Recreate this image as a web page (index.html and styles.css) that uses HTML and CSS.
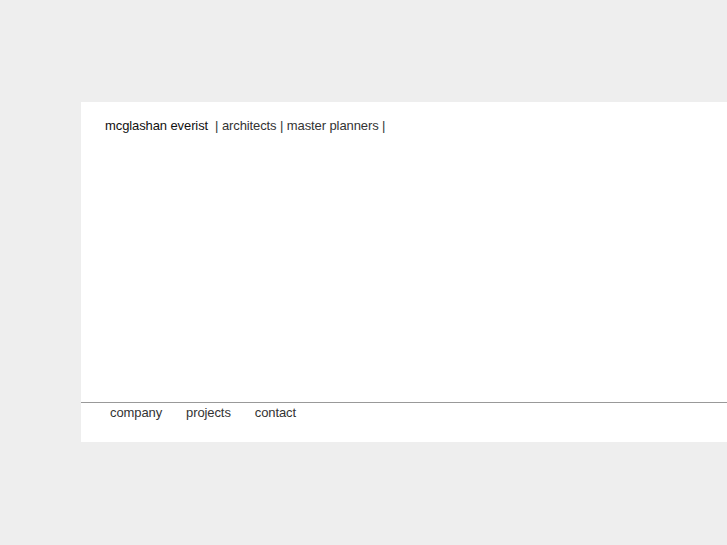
FILE: index.html
```html
<!DOCTYPE html>
<html>
<head>
<meta charset="utf-8">
<link rel="stylesheet" href="styles.css">
</head>
<body>
<div class="panel">
  <div class="header"><span class="name">mcglashan everist</span>&nbsp; | architects | master planners |</div>
  <div class="nav">
    <a class="link">company</a>
    <a class="link">projects</a>
    <a class="link">contact</a>
  </div>
</div>
</body>
</html>
```
FILE: styles.css
```css
html { overflow: hidden; }
body {
  margin: 0;
  background: #eeeeee;
  padding: 102px 0 0 81px;
  font-family: "Liberation Sans", Arial, sans-serif;
}
.panel {
  background: #ffffff;
  width: 646px;
  height: 340px;
  display: flex;
  flex-direction: column;
}
.header {
  padding: 16px 0 0 24px;
  font-size: 13px;
  line-height: 15px;
  color: #333;
  letter-spacing: -0.1px;
  height: 300px;
  box-sizing: border-box;
  white-space: nowrap;
}
.header .name { color: #111; }
.nav {
  border-top: 1px solid #999;
  display: flex;
  gap: 24px;
  padding: 2px 0 0 29px;
  font-size: 13px;
  line-height: 15px;
  color: #333;
  letter-spacing: -0.1px;
}
.link { cursor: pointer; }
```
